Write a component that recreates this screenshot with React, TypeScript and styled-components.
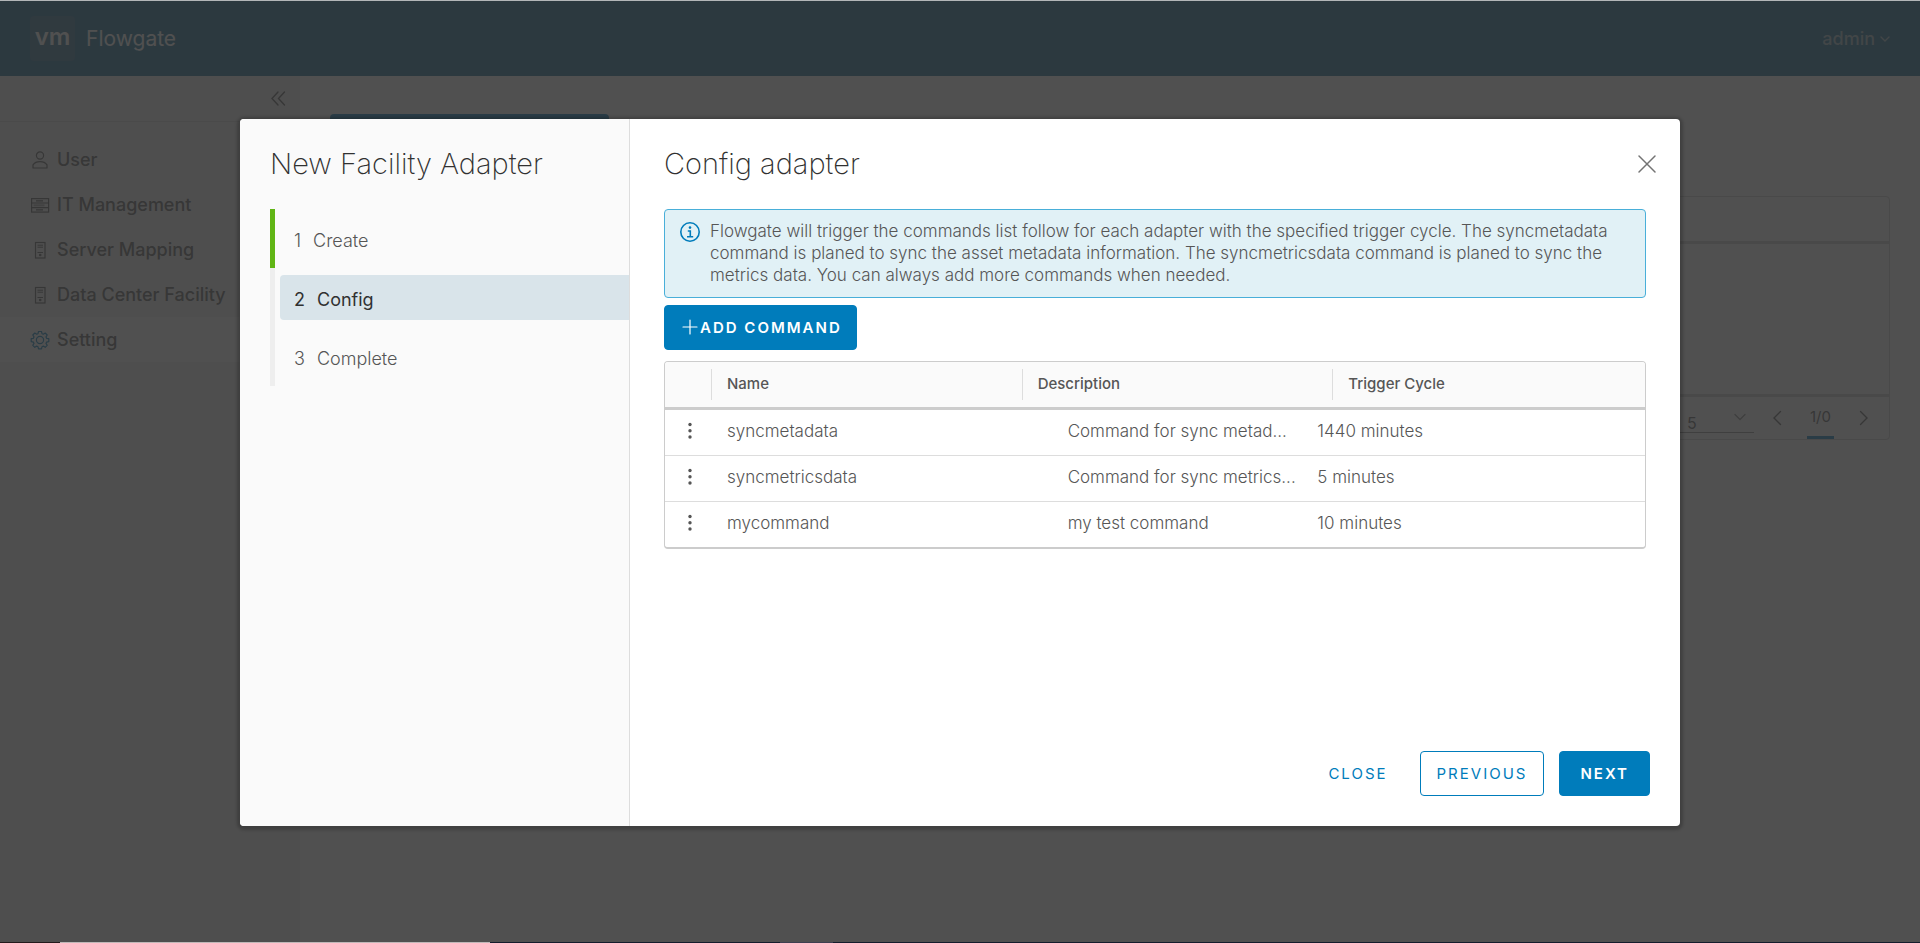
import React from "react";
import styled, { createGlobalStyle, css } from "styled-components";

const GlobalStyle = createGlobalStyle`
  *, *::before, *::after { box-sizing: border-box; }
  html, body { margin: 0; padding: 0; }
  body {
    font-family: Inter, "Liberation Sans", sans-serif;
    font-size: 17px;
    line-height: 22px;
    color: #565656;
    background: #fff;
  }
  button, select { font-family: inherit; color: inherit; }
  h1, h2, p { margin: 0; }
  svg { display: block; flex: none; }
`;

const Frame = styled.div`
  display: flex;
  flex-direction: column;
  min-height: 100vh;
`;

const TopEdge = styled.div`
  height: 1px;
  background: #b3b6b8;
`;

const BottomEdge = styled.div`
  height: 1px;
  background: linear-gradient(
    to right,
    #231a1c 3.1%,
    #c0b8b8 3.1% 25.5%,
    #141c2c 25.5% 40.6%,
    #3e3f50 40.6% 43.4%,
    #141c2c 43.4%
  );
`;

const Viewport = styled.div`
  position: relative;
  flex: 1;
  display: flex;
  flex-direction: column;
`;

const Header = styled.header`
  display: flex;
  align-items: center;
  justify-content: space-between;
  height: 75px;
  padding: 0 30px;
  background: #106690;
`;

const Brand = styled.a`
  display: flex;
  align-items: center;
  gap: 11px;
  color: #fff;
  font-size: 21px;
  text-decoration: none;
`;

const Logo = styled.span`
  display: grid;
  place-items: center;
  width: 45px;
  height: 45px;
  padding-bottom: 3px;
  border-radius: 4px;
  background: #2b6a8a;
  font-size: 24px;
  font-weight: 600;
`;

const UserMenu = styled.button`
  display: flex;
  align-items: center;
  gap: 5px;
  padding: 0;
  border: 0;
  background: none;
  color: #9fb8c4;
  font-size: 18px;
  font-weight: 500;
`;

const Body = styled.div`
  flex: 1;
  display: flex;
`;

const SideNav = styled.nav`
  width: 300px;
  background: #f0f0f0;
`;

const CollapseBar = styled.div`
  display: flex;
  align-items: flex-start;
  justify-content: flex-end;
  height: 46px;
  padding: 15px 14px 0 0;
  border-bottom: 1px solid #d8d8d8;
`;

const IconButton = styled.button`
  display: grid;
  place-items: center;
  padding: 0;
  border: 0;
  background: none;
`;

const NavList = styled.ul`
  margin: 0;
  padding: 15px 0 0;
  list-style: none;
`;

const NavLink = styled.a<{ $active?: boolean }>`
  display: flex;
  align-items: center;
  gap: 7px;
  height: 45px;
  padding-left: 30px;
  color: #565656;
  background: ${(p) => (p.$active ? "#ffffff" : "transparent")};
  font-size: 18px;
  font-weight: 500;
  text-decoration: none;
  svg { ${(p) => p.$active && css`color: #007cbb;`} }
`;

const Main = styled.main`
  flex: 1;
  padding: 38px 30px 0;
`;

const PageAction = styled.button`
  display: block;
  width: 279px;
  height: 45px;
  border: 0;
  border-radius: 4px;
  background: #007cbb;
`;

const Grid = styled.section`
  display: flex;
  flex-direction: column;
  margin-top: 37px;
  border: 1px solid #ccc;
  border-radius: 4px;
`;

const GridHead = styled.div`
  height: 47px;
  border-bottom: 3px solid #ccc;
`;

const GridBody = styled.div`
  height: 150px;
`;

const GridFooter = styled.div`
  display: flex;
  justify-content: flex-end;
  height: 45px;
  padding-right: 20px;
  border-top: 3px solid #ccc;
`;

const PageSize = styled.label`
  display: flex;
  align-items: center;
  align-self: flex-start;
  width: 75px;
  height: 36px;
  margin-right: 18px;
  border-bottom: 1px solid #8c8c8c;
  select {
    flex: 1;
    padding: 16px 0 0 8px;
    border: 0;
    background: none;
    appearance: none;
    font-size: 16px;
  }
  svg { margin: 5px 8px 0 0; color: #8c8c8c; }
`;

const PageMark = styled.span`
  display: flex;
  justify-content: center;
  width: 27px;
  margin: 0 25px;
  padding-top: 9px;
  border-bottom: 3px solid #007cbb;
  font-size: 15px;
`;

const Pager = styled.div`
  display: flex;
  ${IconButton} { height: 41px; }
`;

const Backdrop = styled.div`
  position: absolute;
  inset: 0;
  display: grid;
  place-items: center;
  padding-top: 2px;
  background: rgba(49, 49, 49, 0.85);
`;

const Dialog = styled.div`
  display: flex;
  width: 75%;
  height: 75vh;
  overflow: hidden;
  border-radius: 4px;
  background: #fff;
  box-shadow: 0 1px 3px 3px rgba(0, 0, 0, 0.2);
`;

const StepPane = styled.aside`
  flex: 0 0 390px;
  padding: 29px 0 0 30px;
  border-right: 1px solid #ddd;
  background: #fafafa;
`;

const Title = styled.h1`
  color: #313131;
  font-size: 29px;
  font-weight: 200;
  line-height: 32px;
`;

const Steps = styled.ol`
  margin: 29px 0 0;
  padding: 0;
  list-style: none;
`;

const Step = styled.li<{ $done?: boolean }>`
  padding: 7px 0 7px 5px;
  border-left: 5px solid ${(p) => (p.$done ? "#60b515" : "#eeeeee")};
`;

const StepButton = styled.button<{ $current?: boolean }>`
  display: flex;
  align-items: center;
  gap: 12px;
  width: 100%;
  height: 45px;
  padding: 4px 0 0 14px;
  border: 0;
  border-radius: 4px 0 0 4px;
  background: ${(p) => (p.$current ? "#d9e4ea" : "transparent")};
  color: ${(p) => (p.$current ? "#313131" : "#565656")};
  font-size: 18px;
  font-weight: ${(p) => (p.$current ? 400 : 300)};
`;

const Content = styled.div`
  flex: 1;
  min-width: 0;
  display: flex;
  flex-direction: column;
  padding: 29px 23px 30px 34px;
`;

const TitleRow = styled.div`
  display: flex;
  align-items: center;
  justify-content: space-between;
`;

const PageBody = styled.div`
  flex: 1;
  display: flex;
  flex-direction: column;
  align-items: flex-start;
  padding: 29px 11px 0 0;
`;

const Alert = styled.div`
  display: flex;
  gap: 9px;
  width: 100%;
  padding: 10px 20px 11px 14px;
  border: 1px solid #49afd9;
  border-radius: 4px;
  background: #e1f1f6;
  font-weight: 300;
  svg { margin-top: 1px; color: #007cbb; }
`;

const Button = styled.button<{ $kind: "primary" | "outline" | "flat" }>`
  display: flex;
  align-items: center;
  justify-content: center;
  height: 45px;
  padding: 0 16px;
  border: 1px solid ${(p) => (p.$kind === "flat" ? "transparent" : "#007cbb")};
  border-radius: 4px;
  background: ${(p) => (p.$kind === "primary" ? "#007cbb" : "transparent")};
  color: ${(p) => (p.$kind === "primary" ? "#ffffff" : "#007cbb")};
  font-size: 15px;
  font-weight: ${(p) => (p.$kind === "primary" ? 600 : 400)};
  letter-spacing: 2px;
  text-transform: uppercase;
`;

const AddButton = styled(Button)`
  margin: 7px 0 11px;
  padding: 0 14px 0 15px;
`;

const NextButton = styled(Button)`
  padding: 0 20px;
`;

const Table = styled.table`
  display: block;
  width: 100%;
  border: 1px solid #ccc;
  border-bottom-width: 2px;
  border-radius: 4px;
  overflow: hidden;
  thead, tbody { display: block; }
`;

const HeadRow = styled.tr`
  display: grid;
  grid-template-columns: 46px 311fr 311fr 313fr;
  align-items: center;
  height: 48px;
  border-bottom: 3px solid #ccc;
  background: #fafafa;
`;

const HeadCell = styled.th`
  height: 31px;
  padding: 0 0 0 15px;
  border-left: 1px solid #ddd;
  font-size: 15px;
  font-weight: 500;
  line-height: 29px;
  text-align: left;
  &:first-child { border-left: 0; }
`;

const Row = styled.tr`
  display: grid;
  grid-template-columns: 46px 341fr 250fr 344fr;
  align-items: center;
  height: 46px;
  padding-bottom: 2px;
  border-bottom: 1px solid #ddd;
  &:last-child { height: 45px; border-bottom: 0; }
`;

const Cell = styled.td`
  padding: 0 0 0 16px;
  font-weight: 300;
  white-space: nowrap;
  ${IconButton} { width: 18px; }
`;

const Footer = styled.footer`
  display: flex;
  justify-content: flex-end;
  gap: 15px;
  padding-right: 7px;
`;

const Chevron = ({ d, w, h }: { d: string; w: number; h: number }) => (
  <svg width={w} height={h} viewBox={`0 0 ${w} ${h}`} fill="none" stroke="currentColor" strokeWidth="1.4" strokeLinecap="round">
    <path d={d} />
  </svg>
);

const NavIcon = ({ children }: { children: React.ReactNode }) => (
  <svg width="20" height="20" viewBox="0 0 20 20" fill="none" stroke="currentColor" strokeWidth="1.2">
    {children}
  </svg>
);

const UserIcon = () => (
  <NavIcon>
    <circle cx="10" cy="5.5" r="3.6" />
    <path d="M3 18v-3.2C4.5 12.6 7 11.6 10 11.6s5.5 1 7 3.2V18z" strokeLinejoin="round" />
  </NavIcon>
);

const RackIcon = () => (
  <NavIcon>
    <rect x="1.6" y="3.6" width="17" height="13.5" />
    <path d="M1.6 8h17M1.6 12.7h17M6 5.8h7M6 14.9h7" />
    <path d="M3.5 10.3h11" strokeWidth="2" opacity="0.5" />
  </NavIcon>
);

const ServerIcon = () => (
  <NavIcon>
    <rect x="5.5" y="2.5" width="9.5" height="15.5" />
    <path d="M7.5 5.2h5.5M7.5 7.2h5.5M7.5 12.5h5.5" strokeWidth="1" />
    <circle cx="10.2" cy="15" r="0.7" fill="currentColor" />
  </NavIcon>
);

const GearIcon = () => (
  <NavIcon>
    <circle cx="10" cy="10" r="3.6" />
    <path
      d="M8.5 1.5h3l.5 2.2 1.300.5 1.900-1.200 2 2-1.200 1.900.6 1.400 2.200.4v2.900l-2.200.5-.6 1.300 1.200 1.900-2 2-1.900-1.200-1.300.6-.5 2.200h-3L8 16.700l-1.300-.6-1.900 1.200-2-2L4 13.400l-.6-1.300-2.200-.5V8.700l2.200-.4L4 6.900 2.800 5l2-2 1.900 1.200L8 3.700z"
      strokeLinejoin="round"
    />
  </NavIcon>
);

const InfoIcon = () => (
  <svg width="22" height="22" viewBox="0 0 22 22" fill="none" stroke="currentColor">
    <circle cx="11" cy="11" r="9.2" strokeWidth="1.6" />
    <circle cx="11" cy="6.6" r="1.3" fill="currentColor" stroke="none" />
    <path d="M8.8 10h2.5v5.6M8 15.8h6.2" strokeWidth="1.6" />
  </svg>
);

const PlusIcon = () => (
  <svg width="20" height="20" viewBox="0 0 20 20" stroke="currentColor" strokeWidth="1.2" strokeLinecap="round">
    <path d="M10 3v14M3 10h14" />
  </svg>
);

const CloseIcon = () => (
  <svg width="20" height="20" viewBox="0 0 20 20" stroke="#737373" strokeWidth="1.5" strokeLinecap="round">
    <path d="M2 2l16 16M18 2L2 18" />
  </svg>
);

const DotsIcon = () => (
  <svg width="18" height="20" viewBox="0 0 18 20" fill="#565656">
    <circle cx="9" cy="3.5" r="1.7" />
    <circle cx="9" cy="9.8" r="1.7" />
    <circle cx="9" cy="16" r="1.7" />
  </svg>
);

const navItems = [
  { label: "User", icon: <UserIcon /> },
  { label: "IT Management", icon: <RackIcon /> },
  { label: "Server Mapping", icon: <ServerIcon /> },
  { label: "Data Center Facility", icon: <ServerIcon /> },
  { label: "Setting", icon: <GearIcon />, active: true },
];

const steps = [
  { label: "Create", done: true },
  { label: "Config", current: true },
  { label: "Complete" },
];

const commands = [
  { name: "syncmetadata", description: "Command for sync metad...", cycle: "1440 minutes" },
  { name: "syncmetricsdata", description: "Command for sync metrics...", cycle: "5 minutes" },
  { name: "mycommand", description: "my test command", cycle: "10 minutes" },
];

export default function App() {
  return (
    <>
      <GlobalStyle />
      <Frame>
        <TopEdge />
        <Viewport>
          <Header>
            <Brand href="#">
              <Logo>vm</Logo>
              Flowgate
            </Brand>
            <UserMenu type="button">
              admin
              <Chevron w={10} h={8} d="M1 2l4 4 4-4" />
            </UserMenu>
          </Header>
          <Body>
            <SideNav aria-label="Main">
              <CollapseBar>
                <IconButton type="button" aria-label="Collapse navigation">
                  <Chevron w={16} h={15} d="M8 1L2 7.5 8 14M14.5 1l-6 6.5 6 6.5" />
                </IconButton>
              </CollapseBar>
              <NavList>
                {navItems.map((item) => (
                  <li key={item.label}>
                    <NavLink href="#" $active={item.active}>
                      {item.icon}
                      {item.label}
                    </NavLink>
                  </li>
                ))}
              </NavList>
            </SideNav>
            <Main>
              <PageAction type="button" aria-label="Add facility adapter" />
              <Grid aria-label="Facility adapters">
                <GridHead />
                <GridBody />
                <GridFooter>
                  <PageSize>
                    <select aria-label="Rows per page" defaultValue="5">
                      <option>5</option>
                    </select>
                    <Chevron w={12} h={8} d="M1 1.5l5 5 5-5" />
                  </PageSize>
                  <Pager>
                    <IconButton type="button" aria-label="Previous page">
                      <Chevron w={10} h={16} d="M8.5 1.5L2 8l6.5 6.5" />
                    </IconButton>
                    <PageMark>1/0</PageMark>
                    <IconButton type="button" aria-label="Next page">
                      <Chevron w={10} h={16} d="M1.5 1.5L8 8l-6.5 6.5" />
                    </IconButton>
                  </Pager>
                </GridFooter>
              </Grid>
            </Main>
          </Body>
          <Backdrop>
            <Dialog role="dialog" aria-modal="true" aria-labelledby="wizard-title">
              <StepPane>
                <Title id="wizard-title">New Facility Adapter</Title>
                <Steps>
                  {steps.map((step, i) => (
                    <Step key={step.label} $done={step.done}>
                      <StepButton type="button" $current={step.current}>
                        <span>{i + 1}</span>
                        <span>{step.label}</span>
                      </StepButton>
                    </Step>
                  ))}
                </Steps>
              </StepPane>
              <Content>
                <TitleRow>
                  <Title as="h2">Config adapter</Title>
                  <IconButton type="button" aria-label="Close wizard">
                    <CloseIcon />
                  </IconButton>
                </TitleRow>
                <PageBody>
                  <Alert role="note">
                    <InfoIcon />
                    <p>
                      Flowgate will trigger the commands list follow for each adapter with the specified trigger
                      cycle. The syncmetadata command is planed to sync the asset metadata information. The
                      syncmetricsdata command is planed to sync the metrics data. You can always add more commands
                      when needed.
                    </p>
                  </Alert>
                  <AddButton type="button" $kind="primary">
                    <PlusIcon />
                    Add command
                  </AddButton>
                  <Table>
                    <thead>
                      <HeadRow>
                        <HeadCell aria-label="Actions" />
                        <HeadCell>Name</HeadCell>
                        <HeadCell>Description</HeadCell>
                        <HeadCell>Trigger Cycle</HeadCell>
                      </HeadRow>
                    </thead>
                    <tbody>
                      {commands.map((c) => (
                        <Row key={c.name}>
                          <Cell>
                            <IconButton type="button" aria-label={`Actions for ${c.name}`}>
                              <DotsIcon />
                            </IconButton>
                          </Cell>
                          <Cell>{c.name}</Cell>
                          <Cell>{c.description}</Cell>
                          <Cell>{c.cycle}</Cell>
                        </Row>
                      ))}
                    </tbody>
                  </Table>
                </PageBody>
                <Footer>
                  <Button type="button" $kind="flat">Close</Button>
                  <Button type="button" $kind="outline">Previous</Button>
                  <NextButton type="button" $kind="primary">Next</NextButton>
                </Footer>
              </Content>
            </Dialog>
          </Backdrop>
        </Viewport>
        <BottomEdge />
      </Frame>
    </>
  );
}
